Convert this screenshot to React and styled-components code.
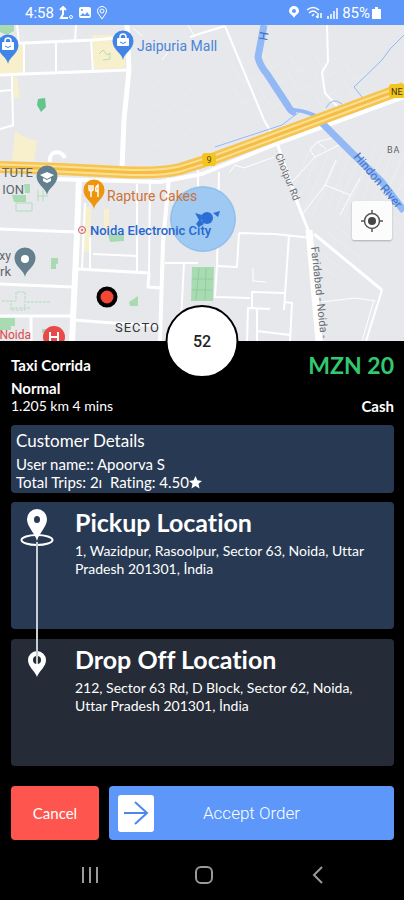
import { useState } from "react";
import styled, { createGlobalStyle } from "styled-components";

const GlobalStyle = createGlobalStyle`
  * {
    box-sizing: border-box;
  }

  body {
    margin: 0;
    background: #000;
    font-family: Lato, "Open Sans", sans-serif;
    font-variant-ligatures: none;
    color: #fff;
  }

  button {
    font-family: inherit;
    color: inherit;
    border: none;
    padding: 0;
    cursor: pointer;
  }

  h2, p {
    margin: 0;
  }
`;

const Screen = styled.div`
  display: flex;
  flex-direction: column;
  min-height: 100vh;
`;

const StatusBar = styled.header`
  display: flex;
  justify-content: space-between;
  align-items: center;
  height: 25px;
  padding: 0 23px 0 25px;
  background: #5c97f9;
  font-family: Roboto, sans-serif;
  font-size: 15px;
  line-height: 24px;
`;

const StatusGroup = styled.div`
  display: flex;
  align-items: center;
  gap: ${(props) => props.$gap}px;
`;

const MapArea = styled.section`
  position: relative;
  height: 316px;
  overflow: hidden;
  background: #e7e8eb;
`;

const MapSvg = styled.svg`
  display: block;
  width: 100%;
  height: 100%;
  font-family: Roboto, sans-serif;
`;

const LocateButton = styled.button`
  position: absolute;
  right: 12px;
  bottom: 101px;
  display: grid;
  place-items: center;
  width: 40px;
  height: 39px;
  background: #fcfcfc;
  border-radius: 2px;
  box-shadow: 0 1px 2px rgba(0, 0, 0, 0.25);
`;

const Panel = styled.main`
  position: relative;
  display: flex;
  flex-direction: column;
  flex: 1;
  padding: 13px 10px 0 11px;
`;

const Timer = styled.div`
  position: absolute;
  top: -36px;
  left: 50%;
  transform: translateX(-50%);
  display: grid;
  place-items: center;
  width: 73px;
  height: 73px;
  border: 2px solid #000;
  border-radius: 50%;
  background: #fff;
  color: #222;
  font-family: Roboto, sans-serif;
  font-size: 16px;
  font-weight: 500;
`;

const Row = styled.div`
  display: flex;
  justify-content: space-between;
  align-items: center;
  font-size: ${(props) => (props.$bold ? 15 : 14)}px;
  line-height: 18px;
  font-weight: ${(props) => (props.$bold ? 700 : 400)};
`;

const FareRow = styled(Row)`
  line-height: 22px;
  margin-bottom: 3px;
`;

const Fare = styled.span`
  color: #32c86f;
  font-size: 23px;
  font-weight: 700;
`;

const Method = styled.strong`
  font-size: 15px;
`;

const Card = styled.section`
  border-radius: 4px;
  background: ${(props) => (props.$dark ? "#252c37" : "#283a53")};
`;

const Customer = styled(Card)`
  margin-top: 10px;
  height: 68px;
  padding: 5px;
  font-size: 15px;
  line-height: 18px;
`;

const CustomerTitle = styled.h2`
  margin-bottom: 3px;
  font-size: 17px;
  line-height: 22px;
  font-weight: 400;
`;

const Rating = styled.p`
  display: flex;
  align-items: center;
`;

const Stops = styled.div`
  position: relative;
  display: flex;
  flex-direction: column;
  gap: 10px;
  margin-top: 9px;
`;

const StopLine = styled.span`
  position: absolute;
  top: 40px;
  left: 25px;
  width: 2px;
  height: 122px;
  background: #c9ced6;
`;

const StopCard = styled(Card)`
  display: grid;
  grid-template-columns: 52px 1fr;
  column-gap: 12px;
  height: 127px;
  padding: 6px 10px 0 0;
`;

const StopIcon = styled.div`
  display: flex;
  justify-content: center;
  align-items: flex-start;
`;

const StopTitle = styled.h2`
  font-size: 25px;
  line-height: 28px;
  font-weight: 700;
`;

const Address = styled.p`
  margin-top: 6px;
  max-width: 310px;
  font-size: 14px;
  line-height: 18px;
`;

const Actions = styled.div`
  display: flex;
  gap: 10px;
  margin-top: 20px;
`;

const CancelButton = styled.button`
  flex: 0 0 88px;
  height: 54px;
  border-radius: 4px;
  background: #fe554f;
  font-size: 15px;
`;

const AcceptButton = styled.button`
  display: grid;
  grid-template-columns: 36px 1fr 36px;
  align-items: center;
  flex: 1;
  height: 54px;
  padding: 0 9px;
  border-radius: 4px;
  background: #5c97f9;
  font-family: Roboto, sans-serif;
  font-size: 17px;
  font-weight: 300;
`;

const ArrowBox = styled.span`
  display: grid;
  place-items: center;
  width: 36px;
  height: 37px;
  border-radius: 3px;
  background: #fff;
`;

const NavBar = styled.nav`
  display: grid;
  grid-template-columns: repeat(3, 114px);
  justify-content: center;
  align-items: center;
  margin-top: 20px;
  padding-left: 3px;
  height: 30px;
`;

const NavButton = styled.button`
  display: grid;
  place-items: center;
  height: 30px;
  background: none;
`;

const whiteRoads = [
  { w: 5, d: "M127 25 L129 70 L124 120 L122 168" },
  { w: 3, d: "M0 45 L24 43 L93 40 L127 37" },
  { w: 3, d: "M0 75 L24 74 L128 70" },
  { w: 2, d: "M76 25 L75 41 M56 42 L56 73 M91 40 L93 71 M17 25 L19 43 M24 43 L24 74" },
  { w: 2, d: "M12 75 L13 126 M0 91 L12 90 M0 129 L14 125" },
  { w: 1, d: "M188 25 L195 37 M133 28 L142 36 M168 52 L162 60" },
  { w: 2, d: "M190 37 L202 33 L225 26" },
  { w: 2, d: "M225 26 L264 120 L272 134" },
  { w: 2, d: "M327 25 L328 62 L322 72 L325 93 L337 106" },
  { w: 4, d: "M50 179 L160 182 L202 174 L276 144 L404 97" },
  { w: 6, d: "M79 178 L77 235 L72 341" },
  { w: 3, d: "M0 229 L76 232 M0 284 L73 287 M0 316 L72 316 M31 316 L31 341" },
  { w: 3, d: "M78 269 L149 273 L148 287 L161 288 M74 320 L113 323 L162 326" },
  { w: 4, d: "M169 178 L163 242 L160 341" },
  { w: 2, d: "M150 180 L149 273 M93 254 L137 256 M137 184 L137 271 M90 237 L90 269 M85 203 L82 269" },
  { w: 2, d: "M165 263 L198 263 M184 262 L180 341 M198 170 L198 190 M219 172 L217 266" },
  { w: 3, d: "M277 143 L299 207 L310 235" },
  { w: 7, d: "M309 230 L319 341" },
  { w: 3, d: "M314 234 L382 290" },
  { w: 2, d: "M382 290 L366 341" },
  { w: 1, d: "M374 300 L362 341 M322 302 L355 298 L376 301" },
  { w: 2, d: "M239 233 L275 234 L312 238 M239 233 L237 267 L217 266 L215 297 L250 298 M289 235 L284 310" },
  { w: 2, d: "M252 308 L252 292 L284 293 M247 341 L248 308 L270 309 M284 302 L292 303 L290 341 M257 308 L257 341 M257 331 L290 335" },
  { w: 1, d: "M253 268 L253 281 L266 282 M229 173 L235 165 L244 168 L274 157" },
  { w: 1, d: "M292 182 L315 157 L339 145 M315 157 L310 150 L317 142 L332 138 M317 142 L326 149" },
  { w: 1, d: "M302 215 L325 185 L350 195 M325 185 L336 160 M340 215 L360 178" },
];

const highway = "M0 167 L60 169 L120 172 Q160 174 180 169 L215 158 L404 88";

const fineStreets = Array.from({ length: 14 }, (_, i) => i);

function Pin({ x, y, color, children }) {
  return (
    <g transform={`translate(${x} ${y})`}>
      <path
        d="M0 18 C-1 11 -10.500 8 -10.500 -1 A10.500 10.500 0 1 1 10.500 -1 C10.500 8 1 11 0 18Z"
        fill={color}
      />
      {children}
    </g>
  );
}

function Bag() {
  return (
    <>
      <rect x="-6" y="-4" width="12" height="8" rx="1" fill="#fff" />
      <path d="M-3 -4 V-5 A3 3 0 0 1 3 -5 V-4" fill="none" stroke="#fff" strokeWidth="1.500" />
      <path d="M-3 0 Q0 3 3 0" fill="none" stroke="#4285e8" />
    </>
  );
}

function CityMap() {
  return (
    <MapSvg viewBox="0 25 404 316" preserveAspectRatio="xMidYMid slice" role="img" aria-label="Map">
      <rect y="25" width="404" height="316" fill="#e7e8eb" />

      <g fill="#f8efcd">
        <path d="M0 46 L23 45 L24 73 L0 74Z M92 35 L126 35 L125 68 L94 69Z" />
        <path d="M13 77 H17 L20 98 H14Z M15 131 L24 137 L37 141 L34 161 L12 161Z" />
        <path d="M84 207 H91 V252 H84Z M104 209 H109 V235 H104Z" />
      </g>

      <g fill="#a8dbb2">
        <path d="M0 25 H14 V31 L7 35 L0 32Z" />
        <path d="M192 267 L214 267 L213 301 L191 301Z" />
        <path d="M108 234 H124 V241 L110 242Z M129 302 L138 296 V306 H130Z" />
        <path d="M51 258 h7 v6 h-2 v5 h-5Z M0 318 h15 v8 h-4 v4 h-11Z M42 329 h20 v4 h-20Z" />
        <path d="M12 195 h14 v7 h-12Z M24 184 h6 v9 h-5Z" />
      </g>
      <path d="M38 99 L45 98 L46 107 L41 112 L37 105Z" fill="#64c48b" />
      <g fill="none" stroke="#b2dcbb" strokeWidth="1">
        <path d="M16 203 h16 v8 h-16Z M38 190 v11 M43 190 v11 M38 196 h10" />
        <path d="M2 301 h14 v-9 h9 v18 h-14 v-9 M27 302 h23 M11 308 h20" strokeDasharray="3 1" />
        <path d="M99 54 l4 -4 4 5 3 -2 v6 l-7 1" />
      </g>
      <path d="M199 268 L196 300 M206 268 L205 300 M192 279 H213 M192 290 H213" stroke="#92cc9f" />

      {/* small residential streets east of the highway crossing */}
      <g fill="none" stroke="#ecedef" strokeWidth="1">
        {fineStreets.map((i) => (
          <path key={i} d={`M${312 + i * 8} ${145 + (i % 4) * 5} l-24 56 M${300 + i * 9} ${250 - i * 6} l34 26`} />
        ))}
        {fineStreets.map((i) => (
          <path key={i} d={`M${230 + (i % 5) * 28} ${42 + i * 4} l14 22 l11 -7 M${138 + (i % 4) * 14} ${82 + i * 5} l12 -8`} />
        ))}
      </g>

      <g fill="none" stroke="#fff" strokeLinejoin="round">
        {whiteRoads.map((road) => (
          <path key={road.d} d={road.d} strokeWidth={road.w} />
        ))}
        <path d="M50 162 C48 151 61 149 65 158" strokeWidth="4" />
      </g>

      <g fill="none" stroke="#93b9f5" strokeLinejoin="round">
        <path d="M264 25 L258 57 Q260 66 267 74 L288 106 Q290 111 296 113" strokeWidth="7" />
        <path d="M290 110 Q300 109 316 116 L326 128" strokeWidth="4" />
        <path d="M322 123 L352 153 L381 181 L404 211" strokeWidth="7" />
        <path d="M404 35 L390 49 L382 60 L354 87 L362 97 M215 147 L282 125 L299 112 M326 108 Q332 96 342 104" strokeWidth="1" />
      </g>

      <g fill="none" strokeLinejoin="round">
        <path d={highway} stroke="#f5c451" strokeWidth="12" />
        <path d={highway} stroke="#fddf91" strokeWidth="7" />
        <path d={highway} stroke="#f4bd43" strokeWidth="3" />
      </g>

      <rect x="202" y="153" width="14" height="13" rx="3" fill="#f3c51d" />
      <text x="209" y="163" textAnchor="middle" fontSize="9" fill="#564a20">9</text>
      <rect x="389" y="84" width="18" height="14" rx="3" fill="#f3c51d" />
      <text x="391" y="95" fontSize="9" fill="#3d361c">NE</text>

      <g fill="#3d72c9" fontSize="12">
        <text transform="translate(267 41) rotate(-80)">H</text>
        <text transform="translate(353 157) rotate(50)">Hindon River</text>
      </g>
      <g fill="#696d73" fontSize="10">
        <text transform="translate(275 155) rotate(68)">Chotpur Rd</text>
        <text transform="translate(311 247) rotate(84)" fontSize="11">Faridabad - Noida -</text>
      </g>

      <circle cx="203" cy="219" r="33" fill="#9dc9f2" />
      <circle cx="203" cy="219" r="32" fill="none" stroke="#8fbdec" />
      <g fill="#2b6fd4">
        <circle cx="207" cy="218" r="6" />
        <path d="M213 213 L220 211 L218 217Z M195 213 L202 215 L201 220 L204 224 L199 227 L196 224 L199 220Z" />
      </g>

      <Pin x={8} y={46} color="#4285e8">
        <Bag />
      </Pin>
      <Pin x={123} y={42} color="#4285e8">
        <Bag />
      </Pin>
      <Pin x={47} y={177} color="#64808e">
        <path d="M-7 -2 L0 -5 L7 -2 L0 2Z M-4 1 L0 3 L4 1 V4 L0 6 L-4 4Z" fill="#fff" />
      </Pin>
      <Pin x={94} y={191} color="#ed950f">
        <path d="M-5 -6 V-2 Q-5 0 -3 0 V6 M-3 -6 V0 M-1 -6 V-2 Q-1 0 -3 0 M4 6 V-6 Q1 -4 2 0 H4" fill="none" stroke="#fff" strokeWidth="1.500" />
      </Pin>
      <Pin x={25} y={259} color="#64808e">
        <circle r="4" fill="#fff" />
      </Pin>

      <g fontSize="13">
        <text x="137" y="51" fontSize="14" fill="#4a84d6">Jaipuria Mall</text>
        <text x="107" y="201" fontSize="14" fill="#cb7336">Rapture Cakes</text>
        <text x="90" y="235" fontWeight="500" fill="#2567ce">Noida Electronic City</text>
        <text x="33" y="177" textAnchor="end" fill="#5d666d">TUTE</text>
        <text x="24" y="194" textAnchor="end" fill="#5d666d">ION</text>
        <text x="11" y="260" fontSize="12" textAnchor="end" fill="#5d666d">xy</text>
        <text x="11" y="276" textAnchor="end" fill="#5d666d">rk</text>
        <text x="31" y="339" fontSize="12" textAnchor="end" fill="#dc4b4b">Noida</text>
        <text x="115" y="332" letterSpacing="1" fill="#34373b">SECTO</text>
        <text x="387" y="153" fontSize="9" letterSpacing="1" fill="#5e6267">BA</text>
      </g>

      <circle cx="82" cy="230" r="3.500" fill="#f9e9e9" stroke="#cf5d66" />
      <circle cx="82" cy="230" r="1" fill="#cf5d66" />
      <circle cx="54" cy="337" r="11" fill="#e84a4a" />
      <path d="M50 332 V342 M58 332 V342 M50 337 H58" stroke="#fff" strokeWidth="2" />
      <circle cx="107" cy="297" r="8.500" fill="#f24636" stroke="#000" strokeWidth="4" />
    </MapSvg>
  );
}

function PickupPin() {
  return (
    <svg width="34" height="40" viewBox="0 0 34 40" aria-hidden="true">
      <ellipse cx="17" cy="32" rx="15.500" ry="5" fill="none" stroke="#fff" strokeWidth="2" />
      <path
        d="M17 33 C15 25 7 19 7 11 A10 10 0 0 1 27 11 C27 19 19 25 17 33Z M17 8 A3 3.500 0 0 0 17 15 A3 3.500 0 0 0 17 8Z"
        fill="#fff"
        fillRule="evenodd"
      />
    </svg>
  );
}

function DropPin() {
  return (
    <svg width="20" height="36" viewBox="0 0 20 36" aria-hidden="true">
      <path
        d="M10 32 C8 26 1 22 1 15 A9 9 0 0 1 19 15 C19 22 12 26 10 32Z"
        fill="#fff"
      />
      <circle cx="10" cy="15" r="4" fill="#252c37" />
    </svg>
  );
}

const App = () => {
  const [seconds] = useState(52);

  return (
    <Screen>
      <GlobalStyle />
      <StatusBar>
        <StatusGroup $gap={5}>
          <span>4:58</span>
          <svg width="14" height="14" viewBox="0 0 14 14" fill="none" stroke="#fff" strokeWidth="2">
            <path d="M4 2 V8 L2 12 H9 M1 4 L4 1 L7 4" />
            <circle cx="12" cy="11" r="1.500" strokeWidth="1" />
          </svg>
          <svg width="13" height="13" viewBox="0 0 13 13">
            <rect x="1" y="1" width="12" height="11" rx="2" fill="#fff" />
            <path d="M2 10 L5 7 L7 9 L9 6 L12 10Z" fill="#5c97f9" />
            <circle cx="4" cy="4" r="1" fill="#5c97f9" />
          </svg>
          <svg width="12" height="14" viewBox="0 0 12 14" fill="none" stroke="#fff">
            <path d="M6 13 L2 7 A4.500 4.500 0 1 1 10 7Z" />
            <circle cx="6" cy="5" r="2" />
          </svg>
        </StatusGroup>
        <StatusGroup $gap={4}>
          <svg width="10" height="13" viewBox="0 0 10 13">
            <path d="M5 12 C4 9 0 8 0 5 A5 5 0 0 1 10 5 C10 8 6 9 5 12Z M5 3 A2 2 0 0 0 5 7 A2 2 0 0 0 5 3Z" fill="#fff" fillRule="evenodd" />
          </svg>
          <svg width="20" height="13" viewBox="0 0 20 13" fill="none" stroke="#fff" strokeWidth="1.500">
            <path d="M4 4 Q10 -1 16 4 M6 7 Q10 3 14 7 M9 10 L11 8 M15 7 V12 M13 10 L15 12 M18 12 V7" />
          </svg>
          <svg width="11" height="12" viewBox="0 0 11 12" stroke="#fff">
            <path d="M1 9 V12 M4 7 V12 M7 4 V12 M10 1 V12" strokeWidth="1.500" />
          </svg>
          <StatusGroup $gap={2}>
            <span>85%</span>
            <svg width="9" height="12" viewBox="0 0 9 12">
              <path d="M3 0 H6 V2 H9 V12 H0 V2 H3Z" fill="#fff" />
            </svg>
          </StatusGroup>
        </StatusGroup>
      </StatusBar>

      <MapArea>
        <CityMap />
        <LocateButton aria-label="My location">
          <svg width="24" height="24" viewBox="0 0 24 24" fill="none" stroke="#555" strokeWidth="1.500">
            <circle cx="12" cy="12" r="7.500" />
            <circle cx="12" cy="12" r="4" fill="#444" stroke="none" />
            <path d="M12 1 V5 M12 19 V23 M1 12 H5 M19 12 H23" />
          </svg>
        </LocateButton>
      </MapArea>

      <Panel>
        <Timer>{seconds}</Timer>
        <FareRow $bold>
          <span>Taxi Corrida</span>
          <Fare>MZN 20</Fare>
        </FareRow>
        <Row $bold>Normal</Row>
        <Row>
          <span>1.205 km 4 mins</span>
          <Method>Cash</Method>
        </Row>

        <Customer>
          <CustomerTitle>Customer Details</CustomerTitle>
          <p>User name:: Apoorva S</p>
          <Rating>
            Total Trips: 2ı&nbsp; Rating: 4.50
            <svg width="13" height="13" viewBox="0 0 24 24" fill="#fff" aria-hidden="true">
              <path d="M12 0 L15.500 8 L24 9 L17.500 14.500 L19.500 23 L12 18.500 L4.500 23 L6.500 14.500 L0 9 L8.500 8Z" />
            </svg>
          </Rating>
        </Customer>

        <Stops>
          <StopCard>
            <StopIcon>
              <PickupPin />
            </StopIcon>
            <div>
              <StopTitle>Pickup Location</StopTitle>
              <Address>1, Wazidpur, Rasoolpur, Sector 63, Noida, Uttar Pradesh 201301, İndia</Address>
            </div>
          </StopCard>
          <StopCard $dark>
            <StopIcon>
              <DropPin />
            </StopIcon>
            <div>
              <StopTitle>Drop Off Location</StopTitle>
              <Address>212, Sector 63 Rd, D Block, Sector 62, Noida, Uttar Pradesh 201301, İndia</Address>
            </div>
          </StopCard>
          <StopLine />
        </Stops>

        <Actions>
          <CancelButton>Cancel</CancelButton>
          <AcceptButton>
            <ArrowBox>
              <svg width="26" height="26" viewBox="0 0 26 26" fill="none" stroke="#4a88ec" strokeWidth="2">
                <path d="M1 13 H24 M12 2 L24 13 L12 24" />
              </svg>
            </ArrowBox>
            <span>Accept Order</span>
          </AcceptButton>
        </Actions>

        <NavBar>
          <NavButton aria-label="Recent apps">
            <svg width="18" height="18" viewBox="0 0 18 18" stroke="#9a9a9a" strokeWidth="2">
              <path d="M2 1 V17 M9 1 V17 M16 1 V17" />
            </svg>
          </NavButton>
          <NavButton aria-label="Home">
            <svg width="20" height="20" viewBox="0 0 20 20" fill="none" stroke="#9a9a9a" strokeWidth="2">
              <rect x="2" y="2" width="16" height="16" rx="5" />
            </svg>
          </NavButton>
          <NavButton aria-label="Back">
            <svg width="12" height="18" viewBox="0 0 12 18" fill="none" stroke="#9a9a9a" strokeWidth="2">
              <path d="M10 1 L2 9 L10 17" />
            </svg>
          </NavButton>
        </NavBar>
      </Panel>
    </Screen>
  );
};

export default App;
